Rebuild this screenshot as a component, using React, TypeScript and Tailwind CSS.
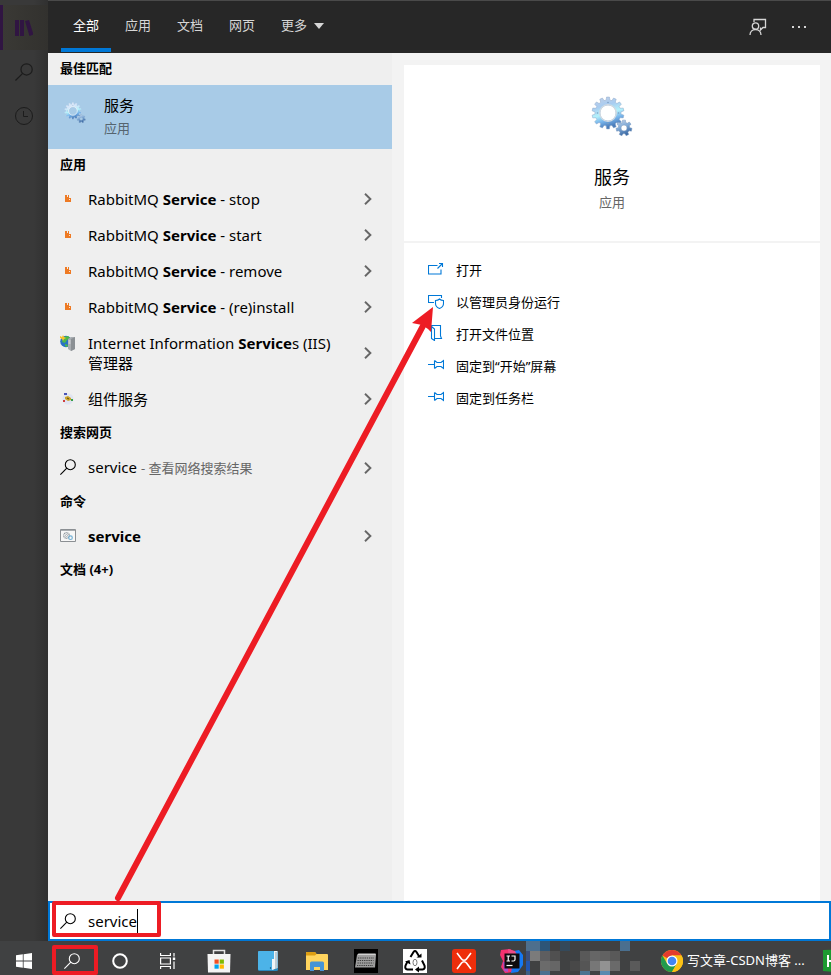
import type { ReactNode } from "react";

const tabs = ["全部", "应用", "文档", "网页"];

// x, y, width, height, fill
const mosaic: [number, number, number, number, string][] = [
  [0, 0, 14, 10, "#4d6f8d"],
  [14, 0, 10, 10, "#2d5577"],
  [34, 0, 10, 10, "#34495a"],
  [94, 0, 10, 10, "#4a6f8f"],
  [0, 10, 4, 10, "#3b4f7c"],
  [4, 10, 10, 10, "#7b7b7b"],
  [14, 10, 10, 10, "#5e5e60"],
  [24, 10, 10, 10, "#505050"],
  [54, 10, 10, 10, "#595959"],
  [64, 10, 10, 10, "#666666"],
  [74, 10, 10, 10, "#626262"],
  [84, 10, 10, 10, "#595959"],
  [0, 20, 4, 10, "#2255b0"],
  [14, 20, 10, 10, "#6b6b6b"],
  [24, 20, 10, 10, "#666666"],
  [44, 20, 10, 10, "#484848"],
  [54, 20, 10, 10, "#555555"],
  [64, 20, 10, 10, "#777777"],
  [74, 20, 10, 10, "#929292"],
  [84, 20, 10, 10, "#6a6a6a"],
  [104, 20, 10, 10, "#5a5a5a"],
  [0, 30, 4, 4, "#3d5f84"],
  [14, 30, 10, 4, "#4c7090"],
  [54, 30, 10, 4, "#4a7390"],
  [74, 30, 10, 4, "#5a8ab0"],
];

function SearchIcon({ className }: { className: string }) {
  return (
    <svg viewBox="0 0 16 16" className={className} fill="none" stroke="currentColor" strokeWidth="1.1">
      <circle cx="10.3" cy="5.7" r="5" />
      <path d="M6.8 9.2L.4 15.6" />
    </svg>
  );
}

function gearPath(cx: number, cy: number, outer: number, inner: number, teeth: number) {
  const points: string[] = [];
  const step = (Math.PI * 2) / teeth;
  for (let i = 0; i < teeth; i++) {
    const a = i * step - Math.PI / 2;
    [
      [inner, -0.32],
      [outer, -0.2],
      [outer, 0.2],
      [inner, 0.32],
    ].forEach(([r, o]) => {
      points.push(`${(cx + r * Math.cos(a + o * step)).toFixed(2)} ${(cy + r * Math.sin(a + o * step)).toFixed(2)}`);
    });
  }
  return `M${points.join("L")}Z`;
}

function GearsIcon({ className, id, light }: { className: string; id: string; light?: boolean }) {
  return (
    <svg viewBox="0 0 42 42" className={className}>
      <defs>
        <linearGradient id={`${id}-big`} x1="0" y1="0" x2="0.3" y2="1">
          <stop offset="0" stopColor={light ? "#e4eaf6" : "#c3cfe6"} />
          <stop offset="0.35" stopColor={light ? "#d3e6fa" : "#a9ccf0"} />
          <stop offset="0.6" stopColor="#b4f2fb" />
          <stop offset="0.8" stopColor="#77b3ea" />
          <stop offset="1" stopColor="#4a7cba" />
        </linearGradient>
        <linearGradient id={`${id}-small`} x1="0" y1="0" x2="0.4" y2="1">
          <stop offset="0" stopColor={light ? "#e6eefa" : "#c5d3e8"} />
          <stop offset="0.5" stopColor="#82acd8" />
          <stop offset="1" stopColor="#3d6ba5" />
        </linearGradient>
      </defs>
      <path
        d={`${gearPath(17, 17, 16, 13, 14)}M25 17a8 8 0 1 0-16 0a8 8 0 1 0 16 0Z`}
        fill={`url(#${id}-big)`}
        fillRule="evenodd"
        stroke={light ? "#c0d6ec" : "#8fa9c8"}
        strokeWidth="0.5"
      />
      <circle cx="17" cy="17" r="8.3" fill="none" stroke={light ? "#eef3f7" : "#d3dbe2"} strokeWidth="1.3" />
      <path
        d={`${gearPath(33, 32, 8, 5.8, 7)}M36 32a3 3 0 1 0-6 0a3 3 0 1 0 6 0Z`}
        fill={`url(#${id}-small)`}
        fillRule="evenodd"
        stroke="#7896bd"
        strokeWidth="0.5"
      />
      <g fill="#7d9dc0">
        <circle cx="17" cy="6.5" r="0.8" />
        <circle cx="17" cy="27.5" r="0.8" />
        <circle cx="6.5" cy="17" r="0.8" />
        <circle cx="27.5" cy="17" r="0.8" />
      </g>
    </svg>
  );
}

function RabbitIcon() {
  return (
    <svg viewBox="0 0 16 16" className="size-4" shapeRendering="crispEdges">
      <path d="M5 4h2v2h1V4h1v3h2v4H5Z" fill="#ee7a24" />
      <path d="M9 8h1v1H9Z" fill="#fde3cf" />
    </svg>
  );
}

function IisIcon() {
  return (
    <svg viewBox="0 0 16 16" className="size-4">
      <circle cx="6" cy="6.5" r="5.8" fill="#2872c4" />
      <path d="M4 2l4-1 2 2-3 2-2 3-3-1ZM5 9l3 1-1 2-2-1Z" fill="#4db848" />
      <path d="M0 1l2 1 1-2 1 2 2 1-2 1-1 2-1-2-2-1Z" fill="#f6c22c" />
      <path d="M8 4l3-2h4v12l-4 2-3-2Z" fill="#a9adb1" />
      <path d="M11 4l4-2v12l-4 2Z" fill="#8b9094" />
      <path d="M8.5 6h2M8.5 8h2" stroke="#e6e8ea" />
    </svg>
  );
}

function ComponentIcon() {
  return (
    <svg viewBox="0 0 16 16" className="size-4">
      <circle cx="8" cy="8" r="5.5" fill="#e0e4f2" />
      <path d="M5 6l3-1 3 2v2l-3 1-3-2Z" fill="#cba52c" />
      <path d="M7 7l2 1" stroke="#5f4a12" />
      <path d="M4 2h3v2H4Z" fill="#4a55b8" />
      <path d="M3 9h2v2H3Z" fill="#cf3e3e" />
      <path d="M11 8h2v2h-2Z" fill="#36a04a" />
    </svg>
  );
}

function CommandIcon() {
  return (
    <svg viewBox="0 0 16 16" className="size-4" fill="none">
      <path d="M.5 1.5h15v12H.5Z" fill="#f7f7f7" stroke="#8b8f93" />
      <path d="M1 2.5h14" stroke="#a9adb1" />
      <circle cx="6.5" cy="7.5" r="2.8" stroke="#8f979e" strokeWidth="1.3" strokeDasharray="1.2 0.5" />
      <circle cx="6.5" cy="7.5" r="1" stroke="#8f979e" strokeWidth="0.7" />
      <circle cx="10.5" cy="9.7" r="1.8" stroke="#72b0d5" strokeWidth="1.2" />
    </svg>
  );
}

function Chevron() {
  return (
    <svg viewBox="0 0 8 12" className="h-3 w-2 shrink-0" fill="none" stroke="#666" strokeWidth="1.9">
      <path d="M1 .8L6.4 6L1 11.2" />
    </svg>
  );
}

function SectionTitle({ children }: { children: ReactNode }) {
  return <h2 className="flex h-8 items-center px-3 text-[13px] font-bold">{children}</h2>;
}

function ResultRow({ icon, children }: { icon: ReactNode; children: ReactNode }) {
  return (
    <button type="button" className="flex w-full items-center gap-3 py-2 pr-5 pl-3 text-left">
      <span className="flex h-5 w-4 shrink-0 items-center self-start">{icon}</span>
      <span className="flex-1 text-[15px] leading-5">{children}</span>
      <Chevron />
    </button>
  );
}

const pin = <path d="M0 7.5h6M6.5 3.5v8M6.5 3.5l2.5 2h4l2.5-2v8l-2.5-2h-4l-2.5 2" />;

const actions: { label: string; icon: ReactNode }[] = [
  { label: "打开", icon: <path d="M9.5 4.5H.5v8.5h12.5V8.500M9.5 7.5l5-5M11 2.5h3.500v3.500" /> },
  {
    label: "以管理员身份运行",
    icon: <path d="M6 9.5H.5v-7h13V5M7.5 7.500c1.500 0 3-.5 4-1.500c1 1 2.500 1.500 4 1.500v3c0 2-1.500 4-4 5c-2.500-1-4-3-4-5Z" />,
  },
  { label: "打开文件位置", icon: <path d="M3.5 14V.5h9v10.500l1 2.500H6.500M3.5 1.500l3 2.500v11.500l-3-2" /> },
  { label: "固定到“开始”屏幕", icon: pin },
  { label: "固定到任务栏", icon: pin },
];

function Sidebar() {
  return (
    <aside className="w-12 shrink-0 bg-linear-to-r from-[#393939] from-70% to-[#303030] pt-[5px] text-[#1c1c1c]">
      <div className="flex h-[45px] items-center border-l-3 border-[#301542] bg-linear-to-r from-[#3a3935] to-[#32312e] pl-3">
        <svg viewBox="0 0 18 16" className="h-4 w-[18px]" fill="#301542">
          <path d="M0 0h4v16H0ZM5 0h4v16H5ZM10 1l4-1 4.5 14.5-4 1.500Z" />
        </svg>
      </div>
      <div className="flex h-11 items-center justify-center">
        <SearchIcon className="size-[18px]" />
      </div>
      <div className="flex h-11 items-center justify-center">
        <svg viewBox="0 0 18 18" className="size-[18px]" fill="none" stroke="currentColor">
          <circle cx="9" cy="9" r="8.5" />
          <path d="M8.5 4v5.5H13" />
        </svg>
      </div>
    </aside>
  );
}

function Header() {
  return (
    <header className="flex h-[53px] shrink-0 items-stretch border-t border-[#4a4a4a] bg-[#272727] pr-6 pl-[13px] text-[13px] text-[#d6d6d6]">
      <nav className="flex flex-1 gap-[2px]">
        {tabs.map((tab, i) => (
          <button
            key={tab}
            type="button"
            className={`mb-px border-b-4 px-3 pt-[2px] ${i === 0 ? "border-[#0078d7] text-white" : "border-transparent"}`}
          >
            {tab}
          </button>
        ))}
        <button type="button" className="mb-px flex items-center gap-[7px] border-b-4 border-transparent px-3 pt-[2px]">
          更多
          <svg viewBox="0 0 10 6" className="h-[6px] w-[10px]" fill="currentColor">
            <path d="M0 0h10L5 6Z" />
          </svg>
        </button>
      </nav>
      <button type="button" aria-label="反馈" className="mr-6">
        <svg viewBox="0 0 18 18" className="size-[18px]" fill="none" stroke="currentColor" strokeWidth="1.3">
          <path d="M5 4V1.5h11.5v8H14l-2.5 2.5V9.5" />
          <circle cx="6.5" cy="8" r="3.2" />
          <path d="M1 17c0-3.5 2.5-5.5 5.5-5.5S12 13.5 12 17" />
        </svg>
      </button>
      <button type="button" aria-label="选项">
        <svg viewBox="0 0 16 4" className="h-1 w-4" fill="currentColor">
          <path d="M1 1h2v2H1ZM7 1h2v2H7ZM13 1h2v2h-2Z" />
        </svg>
      </button>
    </header>
  );
}

function Results() {
  return (
    <section className="w-[344px] shrink-0 bg-[#efefef]">
      <SectionTitle>最佳匹配</SectionTitle>
      <button type="button" className="flex h-16 w-full items-start gap-[18px] bg-[#a8cbe7] px-4 pt-2 text-left">
        <GearsIcon id="match" className="mt-[9px] size-[22px]" light />
        <span className="flex flex-col">
          <span className="text-[15px] leading-6">服务</span>
          <span className="text-[13px] leading-[22px] text-[#56646f]">应用</span>
        </span>
      </button>

      <SectionTitle>应用</SectionTitle>
      {["stop", "start", "remove", "(re)install"].map((name) => (
        <ResultRow key={name} icon={<RabbitIcon />}>
          RabbitMQ <b>Service</b> - {name}
        </ResultRow>
      ))}
      <ResultRow icon={<IisIcon />}>
        Internet Information <b>Service</b>s (IIS)
        <br />
        管理器
      </ResultRow>
      <ResultRow icon={<ComponentIcon />}>组件服务</ResultRow>

      <SectionTitle>搜索网页</SectionTitle>
      <ResultRow icon={<SearchIcon className="size-4" />}>
        service <span className="text-[13px] text-[#666]">- 查看网络搜索结果</span>
      </ResultRow>

      <SectionTitle>命令</SectionTitle>
      <ResultRow icon={<CommandIcon />}>
        <b>service</b>
      </ResultRow>

      <SectionTitle>文档 (4+)</SectionTitle>
    </section>
  );
}

function Details() {
  return (
    <section className="flex flex-1 flex-col gap-[2px] bg-[#f3f3f3] pt-3 pr-[11px] pl-3">
      <div className="flex h-44 flex-col items-center bg-white pt-[31px]">
        <GearsIcon id="detail" className="size-[42px]" />
        <h1 className="mt-[27px] text-lg leading-6">服务</h1>
        <p className="mt-[3px] text-[13px] leading-5 text-[#666]">应用</p>
      </div>
      <div className="flex-1 bg-white px-6 pt-3">
        {actions.map((action) => (
          <button key={action.label} type="button" className="flex h-8 w-full items-center gap-3 text-[13px]">
            <svg viewBox="0 0 16 16" className="mb-1 size-4" fill="none" stroke="#0078d7" strokeWidth="1.1">
              {action.icon}
            </svg>
            {action.label}
          </button>
        ))}
      </div>
    </section>
  );
}

function SearchBar() {
  return (
    <div className="relative flex h-10 shrink-0 items-center border-2 border-[#0078d7] bg-white pl-[10px]">
      <label htmlFor="query" className="mr-3">
        <SearchIcon className="size-4" />
      </label>
      <input
        id="query"
        type="text"
        aria-label="搜索"
        defaultValue="service"
        className="field-sizing-content text-[15px] outline-none"
      />
      <span className="h-6 w-px bg-black" />
      <span className="absolute -top-[2px] left-[2px] h-9 w-[109px] rounded-xs border-4 border-[#ed1c24]" />
    </div>
  );
}

function TaskButton({ label, className, children }: { label: string; className: string; children: ReactNode }) {
  return (
    <button type="button" aria-label={label} className={`flex h-10 shrink-0 items-center justify-center ${className}`}>
      {children}
    </button>
  );
}

function Taskbar() {
  return (
    <footer className="flex h-[34px] shrink-0 items-start overflow-hidden bg-[#404142] text-white">
      <TaskButton label="开始" className="w-12">
        <svg viewBox="0 0 16 16" className="size-4" fill="#fff">
          <path d="M0 2.2L6.8 1.3V7.6H0ZM7.6 1.2L16 0V7.6H7.6ZM0 8.4H6.8V14.7L0 13.8ZM7.6 8.4H16V16L7.6 14.8Z" />
        </svg>
      </TaskButton>
      <span className="relative flex">
        <TaskButton label="搜索" className="w-12">
          <SearchIcon className="size-4" />
        </TaskButton>
        <span className="absolute top-1 left-1 h-[30px] w-[46px] rounded-xs border-4 border-[#ed1c24]" />
      </span>
      <TaskButton label="Cortana" className="w-12">
        <svg viewBox="0 0 16 16" className="size-4" fill="none" stroke="#fff" strokeWidth="2">
          <circle cx="8" cy="8" r="6.8" />
        </svg>
      </TaskButton>
      <TaskButton label="任务视图" className="w-12">
        <svg viewBox="0 0 16 16" className="size-4" fill="none" stroke="#fff" strokeWidth="1.2">
          <path d="M.6 0v2.500h9.800V0M.6 16v-2.500h9.800V16M.6 5h9.800v6H.6ZM14 0v3.500M14 8.500V16" />
          <path d="M12.8 4.5h2.400v2.500h-2.400Z" fill="#fff" stroke="none" />
        </svg>
      </TaskButton>
      <TaskButton label="Microsoft Store" className="ml-[2px] w-[49px]">
        <svg viewBox="0 0 24 24" className="size-6">
          <path d="M6.5 6V1.500h11V6" fill="none" stroke="#e4e4e4" strokeWidth="1.5" />
          <path d="M.5 5h23l-.5 18.500H1Z" fill="#f4f4f4" />
          <path d="M7.5 10.500h4.200v4.200H7.500Z" fill="#f25022" />
          <path d="M12.700 10.500h4.200v4.200h-4.200Z" fill="#7fba00" />
          <path d="M7.500 15.500h4.200v4.200H7.500Z" fill="#00a4ef" />
          <path d="M12.700 15.500h4.200v4.200h-4.200Z" fill="#ffb900" />
        </svg>
      </TaskButton>
      <TaskButton label="笔记本" className="w-[49px]">
        <svg viewBox="0 0 22 22" className="size-[22px]">
          <rect x="1" y="1" width="20" height="20" rx="1.5" fill="#2889bd" />
          <rect x="1" y="1" width="16" height="19" rx="1" fill="#4cb3e8" />
          <path d="M17 1h3.500v17L15 20V9h2Z" fill="#f0f4f6" />
          <path d="M19 2v17" stroke="#8aa4b3" />
          <circle cx="13.5" cy="18" r="0.7" fill="#15425c" />
        </svg>
      </TaskButton>
      <TaskButton label="文件资源管理器" className="w-[49px]">
        <svg viewBox="0 0 22 20" className="h-5 w-[22px]">
          <path d="M0 2q0-1 1-1h8l1.500 2H21q1 0 1 1v15H0Z" fill="#ffd45e" />
          <path d="M0 2q0-1 1-1h8l1.500 2L9 4.500H0Z" fill="#dd9d12" />
          <path d="M4 20v-8q0-1.500 1.500-1.500h11Q18 10.500 18 12v8h-4v-4H8v4Z" fill="#4694d6" />
        </svg>
      </TaskButton>
      <TaskButton label="键盘" className="w-[49px]">
        <svg viewBox="0 0 24 24" className="size-6" fill="none">
          <path d="M0 0h24v24H0Z" fill="#000" />
          <path d="M3 6h19l-1 12.500H1Z" fill="#9d9d9d" />
          <path d="M3 6l1.500-1.500h17L22 6Z" fill="#d0d0d0" />
          <path d="M4 9h16M3.500 11.500h16M3.500 14h16M3 16.500h16" stroke="#3c3c3c" strokeDasharray="1.3 0.9" />
        </svg>
      </TaskButton>
      <TaskButton label="回收" className="w-[49px]">
        <svg viewBox="0 0 24 24" className="size-6" fill="none">
          <path d="M0 0h24v24H0Z" fill="#fff" />
          <path
            d="M7.500 8l3-5q1.500-2 3 0l3 5M19 11.500l2.500 5q1 3.500-2 4H14.500M10 20.500H4.500q-3-.5-2-4l2-4"
            stroke="#000"
            strokeWidth="2"
          />
          <path d="M13.500 8.500h5V4.500ZM16 17.500v6l-4-3ZM2 12.500l4.500-1.500 1 4.500Z" fill="#000" />
          <ellipse cx="12" cy="13.5" rx="2" ry="3.2" stroke="#777" />
        </svg>
      </TaskButton>
      <TaskButton label="XMind" className="w-[49px]">
        <svg viewBox="0 0 24 24" className="size-6" fill="none">
          <rect width="24" height="24" rx="3" fill="#ee2e0b" />
          <path d="M5 4l4.500 6q1 1.300 2.500 1.300T14.500 10L19 4M5 20l4.500-6q1-1.300 2.500-1.300t2.500 1.300L19 20" stroke="#fff" strokeWidth="1.6" />
        </svg>
      </TaskButton>
      <button type="button" aria-label="IntelliJ IDEA" className="flex h-10 w-[38px] shrink-0 items-center pl-3">
        <svg viewBox="0 0 24 24" className="size-6">
          <path d="M1 1l9-1 8 5-5 18-8 1-4-6 2-6-3-6Z" fill="#f5316f" />
          <path d="M14 2l5-1 4 5v10l-5 7-7 1 2-11Z" fill="#1579f5" />
          <path d="M8 0l7 2 3 6-9 3Z" fill="#ec4a87" />
          <path d="M3 13h5v10l-4-1Z" fill="#a750c8" />
          <path d="M4.500 4.500h15v15h-15Z" fill="#0d0a0e" />
          <path d="M6.500 16.500h6" stroke="#fff" strokeWidth="1.2" />
          <path d="M6.500 7h3.500M8.250 7v5M6.500 12h3.500M11.500 7h3.500v3.500Q15 12 13.500 12h-2" fill="none" stroke="#fff" strokeWidth="1.2" />
        </svg>
      </button>
      <svg viewBox="0 0 114 34" className="h-[34px] w-[114px] shrink-0" shapeRendering="crispEdges">
        {mosaic.map(([x, y, width, height, fill]) => (
          <rect key={`${x}-${y}`} x={x} y={y} width={width} height={height} fill={fill} />
        ))}
      </svg>
      <button type="button" className="ml-[21px] flex h-10 w-[162px] shrink-0 items-center gap-1 text-[13px]">
        <svg viewBox="0 0 22 22" className="size-[22px]">
          <circle cx="11" cy="11" r="11" fill="#fbc116" />
          <path d="M11 11L1.470 5.500A11 11 0 0 1 20.530 5.500H11Z" fill="#e33b2e" />
          <path d="M1.470 5.500A11 11 0 0 0 11 22L15.760 13.750L6.240 13.750Z" fill="#229a4c" />
          <path d="M11 5.500h9.530A11 11 0 0 1 11 22l4.760-8.250Z" fill="#fbc116" />
          <circle cx="11" cy="11" r="5.5" fill="#fff" />
          <circle cx="11" cy="11" r="4.3" fill="#4285f4" />
        </svg>
        <span>写文章-CSDN博客 ...</span>
      </button>
      <TaskButton label="HBuilder" className="w-6">
        <svg viewBox="0 0 24 24" className="size-6">
          <path d="M0 1L24 0v24L0 22Z" fill="#1c9a30" />
          <path d="M5 6v12M5 12h7M12 6v12" stroke="#fff" strokeWidth="2" />
        </svg>
      </TaskButton>
    </footer>
  );
}

export default function App() {
  return (
    <div className="relative flex min-h-screen flex-col overflow-hidden bg-[#383838] font-['Noto_Sans','Noto_Sans_CJK_SC',sans-serif] text-black">
      <div className="flex flex-1">
        <Sidebar />
        <main className="flex flex-1 flex-col">
          <Header />
          <div className="flex flex-1">
            <Results />
            <Details />
          </div>
          <SearchBar />
        </main>
      </div>
      <Taskbar />

      {/* Arrow from the search box to "run as administrator" */}
      <svg
        viewBox="0 0 330 600"
        className="pointer-events-none absolute bottom-[70px] left-[110px] h-[600px] w-[330px]"
        fill="none"
      >
        <path d="M8 593L314 19" stroke="#ed1c24" strokeWidth="6" strokeLinecap="round" />
        <path d="M323 2L302 18L312 20L318 24L321 27Z" fill="#ed1c24" />
      </svg>
    </div>
  );
}
